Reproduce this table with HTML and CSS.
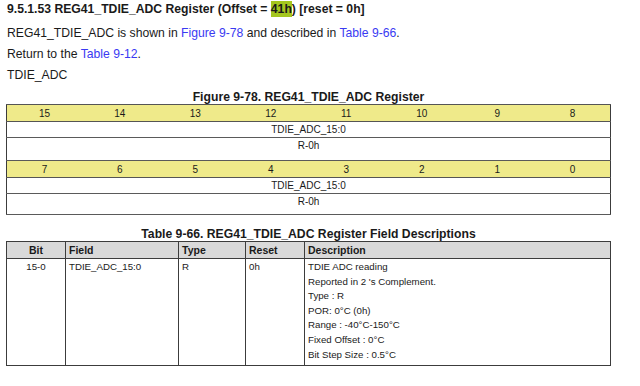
FILE: index.html
```html
<!DOCTYPE html>
<html>
<head>
<meta charset="utf-8">
<link rel="stylesheet" href="styles.css">
</head>
<body>
<div class="page">
  <h1 class="title">9.5.1.53 REG41_TDIE_ADC Register (Offset = <span class="hl">41h</span>) [reset = 0h]</h1>
  <p class="line">REG41_TDIE_ADC is shown in <a class="link">Figure 9-78</a> and described in <a class="link">Table 9-66</a>.</p>
  <p class="line">Return to the <a class="link">Table 9-12</a>.</p>
  <p class="line">TDIE_ADC</p>

  <div class="caption fig-cap">Figure 9-78. REG41_TDIE_ADC Register</div>
  <table class="reg">
    <tr class="bits"><td>15</td><td>14</td><td>13</td><td>12</td><td>11</td><td>10</td><td>9</td><td>8</td></tr>
    <tr class="name"><td colspan="8">TDIE_ADC_15:0</td></tr>
    <tr class="acc first"><td colspan="8">R-0h</td></tr>
    <tr class="bits"><td>7</td><td>6</td><td>5</td><td>4</td><td>3</td><td>2</td><td>1</td><td>0</td></tr>
    <tr class="name"><td colspan="8">TDIE_ADC_15:0</td></tr>
    <tr class="acc last"><td colspan="8">R-0h</td></tr>
  </table>

  <div class="caption tbl-cap">Table 9-66. REG41_TDIE_ADC Register Field Descriptions</div>
  <table class="fields">
    <colgroup>
      <col class="c-bit"><col class="c-field"><col class="c-type"><col class="c-reset"><col class="c-desc">
    </colgroup>
    <tr class="head"><th class="center">Bit</th><th>Field</th><th>Type</th><th>Reset</th><th>Description</th></tr>
    <tr class="body">
      <td class="center">15-0</td>
      <td>TDIE_ADC_15:0</td>
      <td>R</td>
      <td>0h</td>
      <td>TDIE ADC reading<br>Reported in 2 's Complement.<br>Type : R<br>POR: 0°C (0h)<br>Range : -40°C-150°C<br>Fixed Offset : 0°C<br>Bit Step Size : 0.5°C</td>
    </tr>
  </table>
</div>
</body>
</html>
```
FILE: styles.css
```css
html, body {
  margin: 0;
  padding: 0;
  background: #ffffff;
}
.page {
  padding: 0 0 0 6px;
  font-family: "Liberation Sans", Arial, sans-serif;
  color: #1a1a1a;
}
.title {
  margin: 0;
  font-size: 12.2px;
  font-weight: bold;
  line-height: 18px;
  padding-left: 1px;
}
.hl {
  background: #a4c61e;
  padding: 1px 0;
}
.line {
  margin: 0;
  font-size: 12.2px;
  line-height: 21px;
  padding-left: 1px;
}
.title + .line {
  margin-top: 5px;
}
.link {
  color: #3a3af2;
  text-decoration: none;
}
.caption {
  width: 605px;
  text-align: center;
  font-weight: bold;
  font-size: 12.2px;
  line-height: 14px;
}
.fig-cap {
  margin-top: 4px;
}
.tbl-cap {
  margin-top: 12px;
}
.reg {
  width: 605px;
  table-layout: fixed;
  border-collapse: collapse;
  border: 1px solid #3c3c3c;
  font-size: 10px;
}
.reg td {
  padding: 0;
  text-align: center;
  border-bottom: 1px solid #5a5a5a;
}
.reg .bits td {
  background: #efea8a;
  height: 16px;
  border-bottom: 1px solid #555;
  border-top: 1px solid #555;
}
.reg .name td {
  height: 15px;
}
.reg .acc td {
  height: 20px;
  vertical-align: top;
  padding-top: 2px;
}
.reg .acc.last td {
  height: 18px;
}
.fields {
  width: 605px;
  table-layout: fixed;
  border-collapse: collapse;
  border: 1px solid #3c3c3c;
  font-size: 9.7px;
}
.c-bit { width: 59px; }
.c-field { width: 113px; }
.c-type { width: 67px; }
.c-reset { width: 59px; }
.c-desc { width: auto; }
.fields th, .fields td {
  border-left: 1px solid #3c3c3c;
  text-align: left;
  padding: 0 3px;
}
.fields th {
  background: #d9d9d9;
  font-weight: bold;
  font-size: 10.5px;
  height: 16px;
  border-bottom: 1px solid #3c3c3c;
}
.fields td {
  vertical-align: top;
  line-height: 14.6px;
  padding-top: 1px;
  padding-bottom: 3px;
}
.fields .center {
  text-align: center;
}
```
